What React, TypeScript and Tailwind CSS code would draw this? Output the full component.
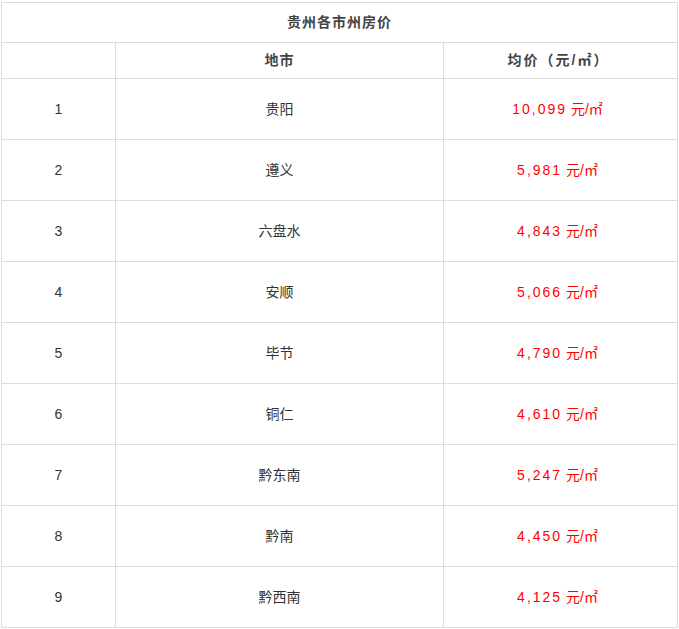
const rows = [
  { n: 1, city: '贵阳', price: '10,099' },
  { n: 2, city: '遵义', price: '5,981' },
  { n: 3, city: '六盘水', price: '4,843' },
  { n: 4, city: '安顺', price: '5,066' },
  { n: 5, city: '毕节', price: '4,790' },
  { n: 6, city: '铜仁', price: '4,610' },
  { n: 7, city: '黔东南', price: '5,247' },
  { n: 8, city: '黔南', price: '4,450' },
  { n: 9, city: '黔西南', price: '4,125' },
]

export default function App() {
  return (
    <div className="bg-white w-[679px] h-[629px] pt-[2px] pl-[1px] font-['Liberation_Sans','Noto_Sans_CJK_SC',sans-serif] text-[14px] text-[#333]">
      <table className="border-collapse w-[676px] table-fixed">
        <colgroup>
          <col className="w-[114px]" />
          <col className="w-[328px]" />
          <col className="w-[234px]" />
        </colgroup>
        <tbody>
          <tr className="h-[40px]">
            <td colSpan={3} className="border border-[#ddd] text-center font-bold tracking-[1px] text-[#444]">
              贵州各市州房价
            </td>
          </tr>
          <tr className="h-[36px]">
            <td className="border border-[#ddd]"></td>
            <td className="border border-[#ddd] text-center font-bold tracking-[1px] text-[#444]">地市</td>
            <td className="border border-[#ddd] pr-[4px] text-center font-bold tracking-[2px] text-[#444]">均价（元/㎡）</td>
          </tr>
          {rows.map((r) => (
            <tr key={r.n} className="h-[61px]">
              <td className="border border-[#ddd] text-center">{r.n}</td>
              <td className="border border-[#ddd] text-center">{r.city}</td>
              <td className="border border-[#ddd] pr-[6px] text-center text-[#f00]">
                <span className="tracking-[2px]">{r.price}</span> 元/㎡
              </td>
            </tr>
          ))}
        </tbody>
      </table>
    </div>
  )
}
